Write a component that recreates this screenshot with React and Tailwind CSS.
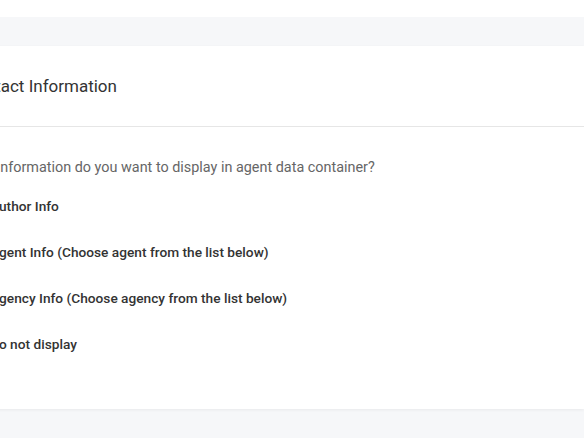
export default function App() {
  const options = [
    'Author Info',
    'Agent Info (Choose agent from the list below)',
    'Agency Info (Choose agency from the list below)',
    'Do not display',
  ];

  return (
    <div className="w-[584px] h-[438px] overflow-hidden bg-white font-['Roboto',sans-serif]">
      <div className="h-[17px] bg-white" />
      <div className="h-[421px] bg-[#f6f7f9] pt-[29px]">
        {/* card is scrolled off the left edge */}
        <div className="-ml-[35px] h-[363px] bg-white shadow-[0_1px_3px_rgba(0,0,0,0.06)]">
          <div className="h-[81px] flex items-center pt-[2px] border-b border-[#e6e6e6]">
            <h2 className="text-[17px] text-[#333]">Contact Information</h2>
          </div>
          <div className="pt-[31px]">
            <p className="text-[14.4px] leading-[20px] text-[#666] -ml-[5px]">
              What information do you want to display in agent data container?
            </p>
            <div className="mt-[5px]">
              {options.map((opt, i) => (
                <label key={opt} className="h-[46px] flex items-center gap-[8px] ml-[1px]">
                  <input type="radio" name="agent" defaultChecked={i === 0} className="w-[16px] h-[16px] accent-[#1ea69a]" />
                  <span className="text-[13.7px] leading-[20px] font-medium text-[#333]">{opt}</span>
                </label>
              ))}
            </div>
          </div>
        </div>
      </div>
    </div>
  );
}
